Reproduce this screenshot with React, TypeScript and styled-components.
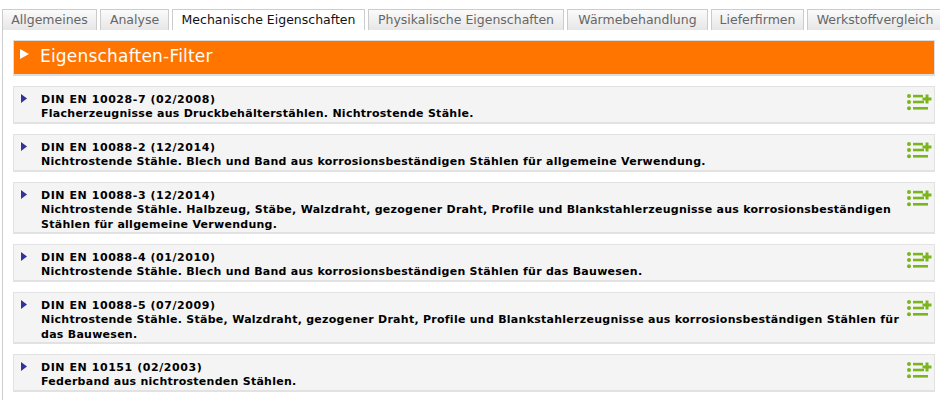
import React from "react";
import styled, { createGlobalStyle } from "styled-components";

const GlobalStyle = createGlobalStyle`
  html, body {
    margin: 0;
    padding: 0;
    background: #ffffff;
  }
  body {
    font-family: "DejaVu Sans", Verdana, sans-serif;
  }
`;

const Page = styled.div`
  width: 940px;
  height: 400px;
  overflow: hidden;
  box-sizing: border-box;
  padding: 9px 0 0 2px;
`;

const TabBar = styled.div`
  display: flex;
  gap: 3px;
  height: 21px;
  position: relative;
  z-index: 1;
`;

const Tab = styled.div<{ $active?: boolean; $width: number }>`
  box-sizing: border-box;
  flex: none;
  width: ${(p) => p.$width}px;
  height: 21px;
  border: 1px solid #cccccc;
  border-bottom: none;
  background: ${(p) => (p.$active ? "#ffffff" : "linear-gradient(#fbfbfb, #e6e6e6)")};
  color: ${(p) => (p.$active ? "#111111" : "#666666")};
  font-size: 12.5px;
  line-height: 20px;
  text-align: center;
  white-space: nowrap;
`;

const Panel = styled.div`
  border-left: 1px solid #cccccc;
  padding: 10px 4px 0 10px;
  display: flex;
  flex-direction: column;
  gap: 10px;
  height: 370px;
`;

const FilterBar = styled.div`
  box-sizing: border-box;
  flex: none;
  width: 922px;
  height: 36px;
  background: #ff7500;
  border: 1px solid #dddddd;
  border-bottom-width: 2px;
  display: flex;
  align-items: flex-start;
  gap: 11px;
  padding: 4px 0 0 6px;
  color: #ffffff;
  font-size: 17px;
  letter-spacing: 0.2px;
  line-height: 22px;
`;

const FilterArrow = styled.svg`
  flex: none;
  margin-top: 4px;
`;

const Entry = styled.div<{ $tall?: boolean }>`
  box-sizing: border-box;
  flex: none;
  width: 922px;
  height: ${(p) => (p.$tall ? 52 : 38)}px;
  background: #f4f4f4;
  border: 1px solid #e2e2e2;
  border-bottom-width: 2px;
  display: flex;
  align-items: flex-start;
  padding: 6px 2px 0 7px;
`;

const Marker = styled.svg`
  flex: none;
  margin: 1px 14px 0 0;
`;

const EntryText = styled.div`
  flex: 1;
  color: #000000;
  font-size: 11px;
  font-weight: 700;
`;

const Norm = styled.div`
  letter-spacing: 0.56px;
  line-height: 14px;
`;

const Title = styled.div`
  letter-spacing: 0.265px;
  line-height: 15px;
  margin-top: -1px;
`;

const AddIcon = styled.svg`
  flex: none;
  margin-top: 1px;
`;

const tabs = [
  { label: "Allgemeines", width: 95 },
  { label: "Analyse", width: 69 },
  { label: "Mechanische Eigenschaften", width: 193, active: true },
  { label: "Physikalische Eigenschaften", width: 196 },
  { label: "Wärmebehandlung", width: 141 },
  { label: "Lieferfirmen", width: 93 },
  { label: "Werkstoffvergleich", width: 136 },
];

const entries = [
  {
    norm: "DIN EN 10028-7 (02/2008)",
    title: "Flacherzeugnisse aus Druckbehälterstählen. Nichtrostende Stähle.",
  },
  {
    norm: "DIN EN 10088-2 (12/2014)",
    title: "Nichtrostende Stähle. Blech und Band aus korrosionsbeständigen Stählen für allgemeine Verwendung.",
  },
  {
    norm: "DIN EN 10088-3 (12/2014)",
    title:
      "Nichtrostende Stähle. Halbzeug, Stäbe, Walzdraht, gezogener Draht, Profile und Blankstahlerzeugnisse aus korrosionsbeständigen Stählen für allgemeine Verwendung.",
    tall: true,
  },
  {
    norm: "DIN EN 10088-4 (01/2010)",
    title: "Nichtrostende Stähle. Blech und Band aus korrosionsbeständigen Stählen für das Bauwesen.",
  },
  {
    norm: "DIN EN 10088-5 (07/2009)",
    title:
      "Nichtrostende Stähle. Stäbe, Walzdraht, gezogener Draht, Profile und Blankstahlerzeugnisse aus korrosionsbeständigen Stählen für das Bauwesen.",
    tall: true,
  },
  {
    norm: "DIN EN 10151 (02/2003)",
    title: "Federband aus nichtrostenden Stählen.",
  },
];

const ListPlus = () => (
  <AddIcon width="25" height="17" viewBox="0 0 25 17">
    <g fill="#7ab51d">
      <circle cx="2" cy="2" r="2" />
      <circle cx="2" cy="8" r="2" />
      <circle cx="2" cy="14.3" r="2" />
      <rect x="6" y="0.8" width="10" height="2.6" />
      <rect x="6" y="6.7" width="11" height="2.6" />
      <rect x="6" y="13" width="15" height="2.6" />
      <rect x="15.5" y="3.5" width="9" height="3" />
      <rect x="18.5" y="0.5" width="3" height="9" />
    </g>
  </AddIcon>
);

export default function App() {
  return (
    <Page>
      <GlobalStyle />
      <TabBar>
        {tabs.map((t) => (
          <Tab key={t.label} $active={t.active} $width={t.width}>
            {t.label}
          </Tab>
        ))}
      </TabBar>
      <Panel>
        <FilterBar>
          <FilterArrow width="9" height="10" viewBox="0 0 9 10">
            <path d="M0 0 L9 5 L0 10 Z" fill="#ffffff" />
          </FilterArrow>
          Eigenschaften-Filter
        </FilterBar>
        {entries.map((e) => (
          <Entry key={e.norm} $tall={e.tall}>
            <Marker width="6" height="9" viewBox="0 0 6 9">
              <path d="M0 0 L6 4.5 L0 9 Z" fill="#33339a" />
            </Marker>
            <EntryText>
              <Norm>{e.norm}</Norm>
              <Title>{e.title}</Title>
            </EntryText>
            <ListPlus />
          </Entry>
        ))}
      </Panel>
    </Page>
  );
}
